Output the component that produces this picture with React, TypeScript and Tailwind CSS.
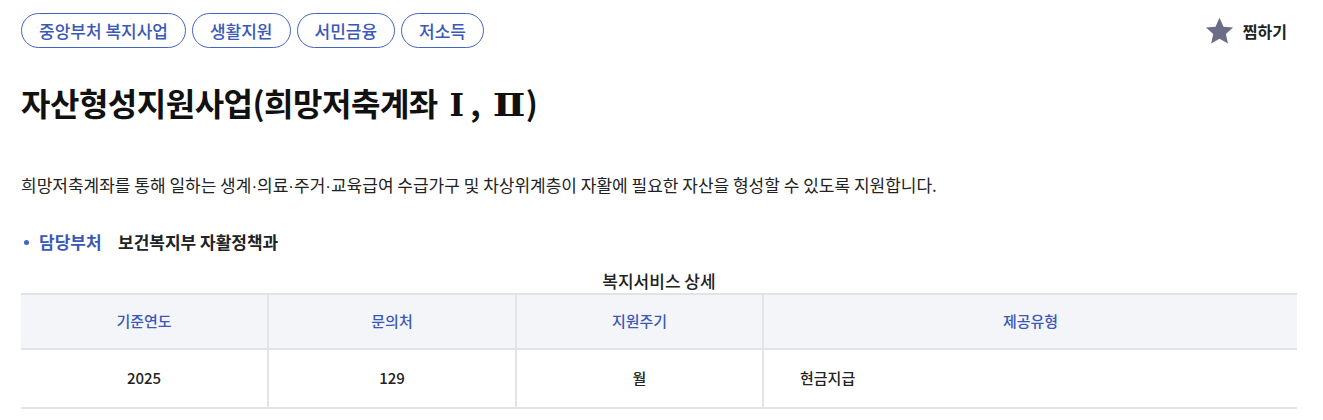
const tags = ['중앙부처 복지사업', '생활지원', '서민금융', '저소득'];

const StarIcon = () => (
  <svg width="29" height="28" viewBox="0 0 24 23" className="fill-[#6b6c85]">
    <path d="M12 0.6l3.3 7.3 7.9.8-5.9 5.3 1.7 7.8L12 17.9l-6.9 3.9 1.7-7.8L.8 8.7l7.9-.8z" />
  </svg>
);

const Dot = () => <span className="font-['Liberation_Sans',sans-serif] leading-none">·</span>;

export default function App() {
  return (
    <div className="w-[1323px] h-[420px] bg-white pl-[21px] pr-[26px] text-[#222] font-['Noto_Sans_CJK_KR','Noto_Sans',sans-serif] overflow-hidden">
      <div className="flex items-center justify-between pt-[13px]">
        <ul className="flex gap-[6px]">
          {tags.map((t) => (
            <li
              key={t}
              className="h-[35px] px-[17px] flex items-center rounded-full border border-[#4563c2] text-[#3a58b8] text-[17px] font-medium"
            >
              {t}
            </li>
          ))}
        </ul>
        <button className="flex items-center gap-[9px] mr-[10px] text-[16px] font-bold text-[#222]">
          <StarIcon />
          찜하기
        </button>
      </div>

      <h2 className="mt-[32px] text-[32px] font-bold leading-[44px] tracking-[-0.5px] text-[#111]">
        자산형성지원사업(희망저축계좌{' '}
        <span className="inline-block ml-[5px] font-['DejaVu_Serif',serif] text-[31px]">Ⅰ</span> ,{' '}
        <span className="inline-block ml-[9px] mr-[4px] font-['DejaVu_Serif',serif] text-[31px] scale-x-125">Ⅱ</span>)
      </h2>

      <p className="mt-[46px] h-[24px] text-[17px] leading-[24px]">
        희망저축계좌를 통해 일하는 생계<Dot />의료<Dot />주거<Dot />교육급여 수급가구 및 차상위계층이 자활에 필요한 자산을 형성할 수 있도록 지원합니다.
      </p>

      <div className="mt-[33px] flex items-center text-[17px] font-bold leading-[24px]">
        <span className="w-[5px] h-[5px] rounded-full bg-[#4563c2] ml-[3px] mr-[10px]" />
        <span className="text-[#3a58b8] w-[79px]">담당부처</span>
        <span>보건복지부 자활정책과</span>
      </div>

      <table className="mt-[16px] w-full border-collapse text-[15px]">
        <caption className="text-[17px] leading-[22px] font-medium pb-[1px]">복지서비스 상세</caption>
        <colgroup>
          <col className="w-[247px]" />
          <col className="w-[248px]" />
          <col className="w-[247px]" />
          <col />
        </colgroup>
        <thead>
          <tr className="bg-[#f4f5f9] border-t-2 border-b-2 border-[#e2e3e7] h-[55px] text-[#3a58b8]">
            <th className="font-medium border-r-2 border-[#e2e3e7]">기준연도</th>
            <th className="font-medium border-r-2 border-[#e2e3e7]">문의처</th>
            <th className="font-medium border-r-2 border-[#e2e3e7]">지원주기</th>
            <th className="font-medium">제공유형</th>
          </tr>
        </thead>
        <tbody>
          <tr className="h-[59px] border-b-2 border-[#e2e3e7] font-medium">
            <td className="text-center border-r-2 border-[#e2e3e7]">2025</td>
            <td className="text-center border-r-2 border-[#e2e3e7]">129</td>
            <td className="text-center border-r-2 border-[#e2e3e7]">월</td>
            <td className="pl-[36px]">현금지급</td>
          </tr>
        </tbody>
      </table>
    </div>
  );
}
